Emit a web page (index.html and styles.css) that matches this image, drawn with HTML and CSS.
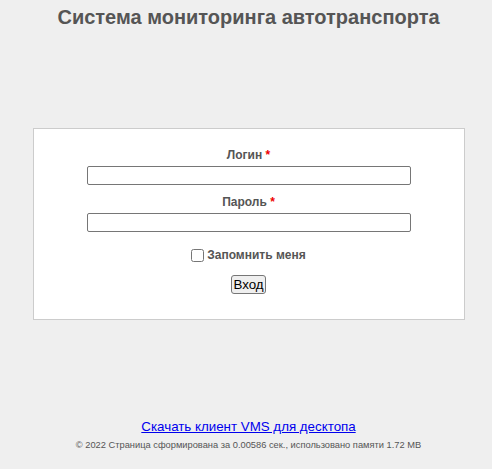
FILE: index.html
```html
<!DOCTYPE html>
<html lang="ru">
<head>
<meta charset="utf-8">
<title>Система мониторинга автотранспорта</title>
<link rel="stylesheet" href="styles.css">
</head>
<body>
<div class="page">
  <h1 class="title">Система мониторинга автотранспорта</h1>
  <form class="card">
    <div class="field">
      <label class="label" for="login">Логин <span class="req">*</span></label>
      <input class="input" id="login" type="text">
    </div>
    <div class="field">
      <label class="label" for="pass">Пароль <span class="req">*</span></label>
      <input class="input" id="pass" type="password">
    </div>
    <div class="remember">
      <input class="check" id="rem" type="checkbox">
      <label class="label" for="rem">Запомнить меня</label>
    </div>
    <div class="actions">
      <button class="btn" type="button">Вход</button>
    </div>
  </form>
  <div class="footer">
    <a class="dl" href="#">Скачать клиент VMS для десктопа</a>
    <div class="stats">© 2022 Страница сформирована за 0.00586 сек., использовано памяти 1.72 MB</div>
  </div>
</div>
</body>
</html>
```

FILE: styles.css
```css
html, body {
  margin: 0;
  padding: 0;
  background: #efefef;
}
body {
  font-family: "Liberation Sans", Arial, sans-serif;
  color: #555;
}
.page {
  padding-left: 5px;
  display: flex;
  flex-direction: column;
  align-items: center;
}
.title {
  margin: 6px 0 0;
  font-size: 20px;
  font-weight: bold;
  line-height: 23px;
  color: #555;
}
.card {
  margin-top: 99px;
  box-sizing: border-box;
  width: 432px;
  height: 192px;
  background: #fff;
  border: 1px solid #ccc;
  padding-top: 19px;
  display: flex;
  flex-direction: column;
  align-items: center;
}
.field {
  display: flex;
  flex-direction: column;
  align-items: center;
  margin-bottom: 10px;
}
.label {
  font-size: 12px;
  font-weight: bold;
  line-height: 15px;
  color: #555;
  margin-bottom: 3px;
}
.req {
  color: #e00;
}
.input {
  box-sizing: border-box;
  width: 324px;
  height: 19px;
  margin: 0;
  border: 1px solid #767676;
  border-radius: 2px;
  padding: 1px 2px;
  font-size: 12px;
}
.remember {
  margin-top: 6px;
  display: flex;
  align-items: center;
}
.remember .label {
  margin: 0;
}
.check {
  margin: 0 3px 0 0;
  width: 13px;
  height: 13px;
}
.actions {
  margin-top: 12px;
}
.btn {
  box-sizing: border-box;
  height: 19px;
  font-family: "Liberation Sans", Arial, sans-serif;
  font-size: 13.33px;
  line-height: 15px;
  margin: 0;
  padding: 1px 1px;
  border: 1px solid #767676;
  border-radius: 3px;
  background: #efefef;
  color: #000;
}
.footer {
  margin-top: 99px;
  display: flex;
  flex-direction: column;
  align-items: center;
}
.dl {
  font-size: 13.33px;
  line-height: 15px;
  color: #00e;
}
.stats {
  margin-top: 6px;
  font-size: 9.3px;
  line-height: 11px;
  color: #555;
}
```
